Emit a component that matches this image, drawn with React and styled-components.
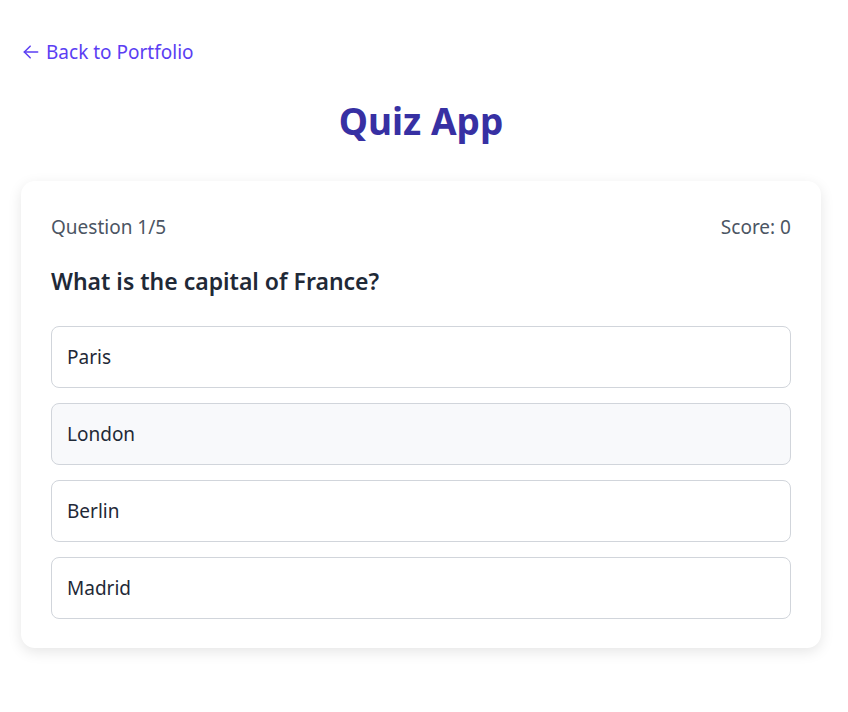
import React, { useState } from 'react';
import styled, { createGlobalStyle } from 'styled-components';

const GlobalStyle = createGlobalStyle`
    * {
        box-sizing: border-box;
    }
    body {
        margin: 0;
        padding: 0;
        background: #ffffff;
        font-family: "Segoe UI", "Noto Sans", "Open Sans", sans-serif;
    }
`

const Page = styled.div`
    max-width: 800px;
    margin: 0 0 0 21px;
    padding: 39px 0 40px;
`

const BackLink = styled.a`
    display: inline-flex;
    align-items: center;
    gap: 5px;
    color: #5b3ef3;
    font-size: 19px;
    line-height: 26px;
    text-decoration: none;
    cursor: pointer;
`

const Title = styled.h1`
    margin: 32px 0 38px;
    text-align: center;
    font-size: 37px;
    font-weight: 700;
    line-height: 44px;
    color: #3730a3;
`

const Card = styled.div`
    background: #ffffff;
    border-radius: 14px;
    box-shadow: 0 4px 14px rgba(0, 0, 0, 0.1);
    padding: 32px 30px 29px;
`

const Meta = styled.div`
    display: flex;
    justify-content: space-between;
    font-size: 19px;
    color: #4b5563;
    line-height: 28px;
`

const Question = styled.h2`
    margin: 25px 0 30px;
    font-size: 23px;
    font-weight: 600;
    color: #1f2937;
    line-height: 30px;
`

const Options = styled.div`
    display: flex;
    flex-direction: column;
    gap: 15px;
`

const Option = styled.button`
    display: block;
    width: 100%;
    height: 62px;
    padding: 0 15px;
    text-align: left;
    font-family: inherit;
    font-size: 19px;
    color: #1f2937;
    background: ${p => (p.$hover ? '#f8f9fb' : '#ffffff')};
    border: 1px solid #d1d5db;
    border-radius: 8px;
    cursor: pointer;
`

const questions = [
    { text: 'What is the capital of France?', options: ['Paris', 'London', 'Berlin', 'Madrid'] }
]

export default function App() {
    const [hovered, setHovered] = useState(1)
    const q = questions[0]

    return (
        <Page>
            <GlobalStyle />
            <BackLink>
                <svg width="20" height="20" viewBox="0 0 24 24" fill="none" stroke="currentColor" strokeWidth="1.8" strokeLinecap="round" strokeLinejoin="round">
                    <path d="M20 12H4" />
                    <path d="M11 19l-7-7 7-7" />
                </svg>
                Back to Portfolio
            </BackLink>
            <Title>Quiz App</Title>
            <Card>
                <Meta>
                    <span>Question 1/5</span>
                    <span>Score: 0</span>
                </Meta>
                <Question>{q.text}</Question>
                <Options>
                    {q.options.map((opt, i) => (
                        <Option key={opt} $hover={hovered === i} onMouseEnter={() => setHovered(i)}>
                            {opt}
                        </Option>
                    ))}
                </Options>
            </Card>
        </Page>
    )
}
